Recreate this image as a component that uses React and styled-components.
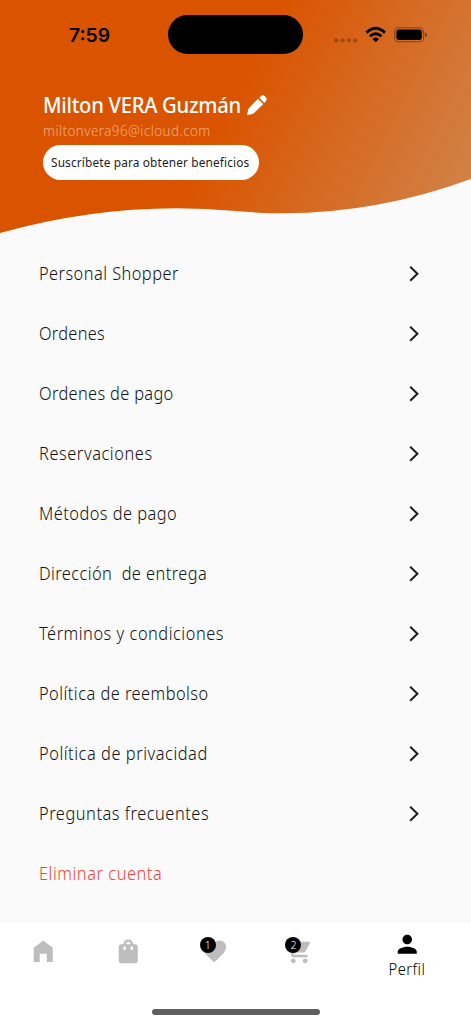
import React from "react";
import styled, { createGlobalStyle } from "styled-components";
import {
  MdHomeFilled,
  MdShoppingBag,
  MdFavorite,
  MdShoppingCart,
  MdPerson,
} from "react-icons/md";

const GlobalStyle = createGlobalStyle`
  * {
    box-sizing: border-box;
  }

  body {
    margin: 0;
    background: #fafafa;
    font-family: "Noto Sans", "Open Sans", sans-serif;
  }
`;

const Screen = styled.div`
  width: 471px;
  height: 1024px;
  display: flex;
  flex-direction: column;
  overflow: hidden;
  background: #fafafa;
`;

const Header = styled.header`
  height: 234px;
  flex: none;
  background: linear-gradient(116.5deg, #da5400 48%, #d0864e 100%);
  clip-path: path(
    "M0 0H471V179Q353.5 222 235.5 211Q117.75 200 0 233Z"
  );
`;

const StatusBar = styled.div`
  height: 54px;
  padding: 15px 43px 0 69px;
  display: grid;
  grid-template-columns: 99px 135px 1fr;
`;

const Time = styled.span`
  font-family: Inter, sans-serif;
  font-size: 19.3px;
  font-weight: 600;
  line-height: 41px;
  color: #000;
`;

const Island = styled.div`
  height: 39px;
  border-radius: 20px;
  background: #000;
`;

const StatusIcons = styled.div`
  height: 39px;
  display: flex;
  align-items: center;
  justify-content: flex-end;
`;

const Account = styled.div`
  padding: 37px 43px 0;
  display: flex;
  flex-direction: column;
  align-items: flex-start;
`;

const NameRow = styled.div`
  display: flex;
  align-items: center;
  gap: 4.5px;
  height: 28px;
`;

// slightly narrowed letterforms, used for all the copy on this screen
const NarrowText = styled.span`
  display: inline-block;
  white-space: pre;
  transform: scaleX(0.92);
  transform-origin: left center;
`;

const Name = styled(NarrowText).attrs({ as: "h1" })`
  width: 199px;
  margin: 0;
  padding-bottom: 2px;
  font-size: 22px;
  font-weight: 500;
  line-height: 26px;
  letter-spacing: -0.32px;
  color: #fff;
`;

const Email = styled(NarrowText)`
  height: 26px;
  font-size: 14.5px;
  font-weight: 300;
  line-height: 22px;
  letter-spacing: 0.5px;
  color: rgba(255, 255, 255, 0.5);
`;

const SubscribeButton = styled.button`
  width: 216px;
  height: 35px;
  padding: 0 0 1px 8px;
  border: 0;
  border-radius: 18px;
  background: #fff;
  color: #1c1c1c;
  font-family: inherit;
  font-size: 12.9px;
  font-weight: 400;
  letter-spacing: 0.15px;
  text-align: left;
`;

const Menu = styled.ul`
  flex: 1;
  margin: 0;
  padding: 9.5px 51px 0 39px;
  list-style: none;
`;

const MenuItem = styled.li`
  height: 59.95px;
  display: flex;
  align-items: center;
  justify-content: space-between;
`;

const MenuLabel = styled(NarrowText)`
  font-size: 17.8px;
  font-weight: 360;
  line-height: 24px;
  letter-spacing: ${(props) => props.$spacing}px;
  color: ${(props) => (props.$danger ? "#f44336" : "#111")};
`;

const BottomNav = styled.nav`
  height: 101px;
  flex: none;
  display: flex;
  flex-direction: column;
  justify-content: space-between;
  align-items: center;
  padding-bottom: 9px;
  background: #fff;
`;

const Tabs = styled.div`
  width: 100%;
  height: 58px;
  display: flex;
`;

const Tab = styled.div`
  flex: ${(props) => (props.$active ? 1.5 : 1)};
  display: flex;
  flex-direction: column;
  align-items: center;
  padding-top: ${(props) => (props.$active ? 6.5 : 14)}px;
  color: ${(props) => (props.$active ? "#000" : "#bdbdbd")};
`;

const IconBox = styled.div`
  position: relative;
  display: flex;
`;

const Badge = styled.span`
  position: absolute;
  top: 0;
  left: 0;
  width: 16px;
  height: 16px;
  border-radius: 50%;
  background: #000;
  color: #fff;
  font-size: 10.5px;
  font-weight: 300;
  line-height: 16px;
  text-align: center;
`;

const TabLabel = styled(NarrowText)`
  font-size: 16px;
  font-weight: 350;
  line-height: 23px;
  letter-spacing: 0.5px;
  transform-origin: center;
`;

const HomeIndicator = styled.div`
  width: 168px;
  height: 6px;
  border-radius: 3px;
  background: #5f5f5f;
`;

const menuItems = [
  { label: "Personal Shopper", spacing: 0.5 },
  { label: "Ordenes", spacing: 0.32 },
  { label: "Ordenes de pago", spacing: 0.38 },
  { label: "Reservaciones", spacing: 0.63 },
  { label: "Métodos de pago", spacing: 0.52 },
  { label: "Dirección  de entrega", spacing: 0.47 },
  { label: "Términos y condiciones", spacing: 0.58 },
  { label: "Política de reembolso", spacing: 0.52 },
  { label: "Política de privacidad", spacing: 0.6 },
  { label: "Preguntas frecuentes", spacing: 0.6 },
  { label: "Eliminar cuenta", spacing: 0.6, danger: true },
];

const tabs = [
  { id: "home", icon: MdHomeFilled },
  { id: "shop", icon: MdShoppingBag },
  { id: "favorites", icon: MdFavorite, badge: 1 },
  { id: "cart", icon: MdShoppingCart, badge: 2 },
  { id: "profile", icon: MdPerson, label: "Perfil", active: true },
];

export default function App() {
  return (
    <Screen>
      <GlobalStyle />
      <Header>
        <StatusBar>
          <Time>7:59</Time>
          <Island />
          <StatusIcons>
            <StatusGlyphs />
          </StatusIcons>
        </StatusBar>
        <Account>
          <NameRow>
            <Name>Milton VERA Guzmán</Name>
            <PencilIcon />
          </NameRow>
          <Email>miltonvera96@icloud.com</Email>
          <SubscribeButton>
            <NarrowText>Suscríbete para obtener beneficios</NarrowText>
          </SubscribeButton>
        </Account>
      </Header>

      <Menu>
        {menuItems.map((item) => (
          <MenuItem key={item.label}>
            <MenuLabel $danger={item.danger} $spacing={item.spacing}>
              {item.label}
            </MenuLabel>
            {!item.danger && <ChevronIcon />}
          </MenuItem>
        ))}
      </Menu>

      <BottomNav>
        <Tabs>
          {tabs.map(({ id, icon: Icon, badge, label, active }) => (
            <Tab key={id} $active={active}>
              <IconBox>
                <Icon size={28.5} />
                {badge && <Badge>{badge}</Badge>}
              </IconBox>
              {label && <TabLabel>{label}</TabLabel>}
            </Tab>
          ))}
        </Tabs>
        <HomeIndicator />
      </BottomNav>
    </Screen>
  );
}

// signal dots, wifi and battery
const StatusGlyphs = () => (
  <svg width="94" height="20" viewBox="0 0 94 20">
    <g fill="#000" fillOpacity="0.25">
      <circle cx="2.2" cy="15.4" r="2.1" />
      <circle cx="8.6" cy="15.4" r="2.1" />
      <circle cx="15" cy="15.4" r="2.1" />
      <circle cx="21.3" cy="15.4" r="2.1" />
    </g>
    <g fill="none" stroke="#000" strokeWidth="2.9">
      <path d="M32.4 7.6Q41.7 -1 51 7.6" />
      <path d="M35.9 11.3Q41.7 6 47.5 11.3" />
    </g>
    <path d="M38.4 13.9Q41.7 11.3 45 13.9L41.7 17.2Z" fill="#000" />
    <rect
      x="60.6"
      y="2.8"
      width="29"
      height="14"
      rx="4.4"
      fill="none"
      stroke="#000"
      strokeOpacity="0.4"
      strokeWidth="1.1"
    />
    <rect x="62.4" y="4.6" width="25.4" height="10.4" rx="2.8" fill="#000" />
    <path d="M91 7.5Q93 8 93 9.8Q93 11.6 91 12.1Z" fillOpacity="0.45" />
  </svg>
);

const PencilIcon = () => (
  <svg width="20" height="20" viewBox="0 0 20 20" fill="#fff">
    <path d="M11 3.8L16.3 9.1L6.9 18.2Q6.2 18.8 5.4 19L.9 19.9Q.1 20 .2 19.2L1.1 14.8Q1.3 13.8 1.9 13.2Z" />
    <path d="M12.2 2.6L14.2 .9Q16.2 -.6 18.4 1.7Q20.6 4 19 6L17.4 7.9Z" />
  </svg>
);

const ChevronIcon = () => (
  <svg width="12" height="20" viewBox="0 0 12 20">
    <path
      d="M2.2 3.8L9.4 10.8L2.2 17.8"
      fill="none"
      stroke="#1c1c1c"
      strokeWidth="2"
    />
  </svg>
);
